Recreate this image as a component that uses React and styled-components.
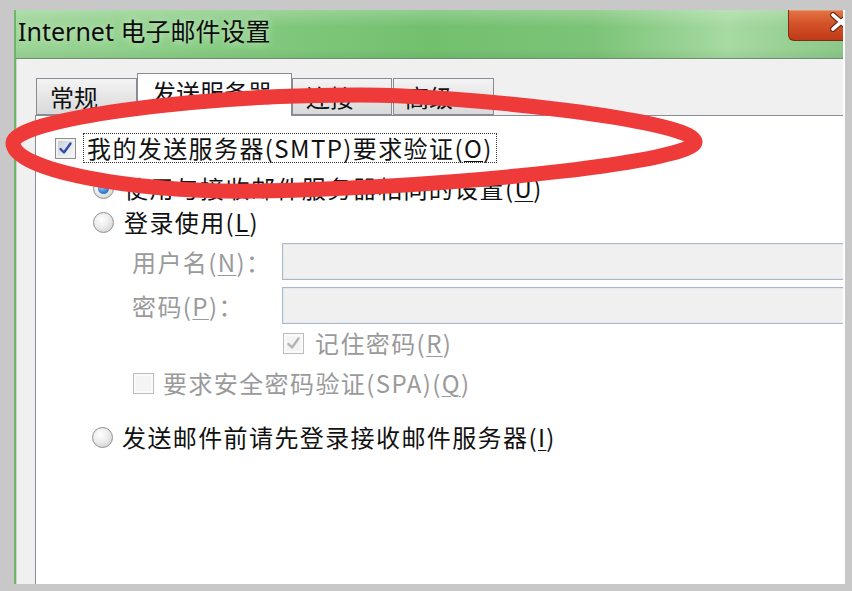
import React from 'react'
import styled, { createGlobalStyle } from 'styled-components'

const GlobalStyle = createGlobalStyle`
html, body {
    margin : 0;
    padding : 0;
}
body {
    background : #c8c8c8;
    font-family : "Noto Sans", "Noto Sans CJK SC", sans-serif;
    overflow : hidden;
}
`
const Page = styled.div`
position : relative;
width : 852px;
height : 591px;
box-sizing : border-box;
padding : 10px 0 0 14px;
`
const Window = styled.div`
width : 831px;
height : 574px;
box-sizing : border-box;
border-left : 2px solid #6fb56c;
border-right : 2px solid #fdfdfd;
display : flex;
flex-direction : column;
overflow : hidden;
`
const TitleBar = styled.div`
flex : none;
height : 48px;
display : flex;
align-items : flex-start;
justify-content : space-between;
background :
    linear-gradient(180deg, rgba(255,255,255,0.22) 0%, rgba(255,255,255,0) 35%, rgba(0,0,0,0) 80%, rgba(0,0,0,0.05) 100%),
    linear-gradient(90deg, #9bd496 0%, #88cc84 22%, #72c06e 50%, #7cc478 70%, #a6daa1 86%, #8cc889 100%);
border-bottom : 1px solid #6e8e6e;
`
const Title = styled.span`
margin : 4px 0 0 2px;
font-size : 25px;
line-height : 34px;
color : #0c0c0c;
text-shadow : 0 0 8px rgba(230,248,225,0.9);
`
const CloseButton = styled.div`
width : 55px;
height : 31px;
box-sizing : border-box;
display : flex;
justify-content : flex-end;
align-items : flex-start;
padding-top : 2px;
overflow : hidden;
background : linear-gradient(180deg, #e27644 0%, #d4522a 45%, #bf3b17 100%);
border : 1px solid #7d2c18;
border-top : none;
border-right : none;
border-radius : 0 0 0 6px;
box-shadow : inset 0 1px 0 rgba(255,255,255,0.25);
`
const CloseGlyph = styled.svg`
margin-right : -10px;
flex : none;
`
const Body = styled.div`
flex : 1;
background : #f0f0f0;
border-left : 1px solid #d2d2d2;
padding : 14px 0 0 18px;
overflow : hidden;
`
const TabRow = styled.div`
display : flex;
align-items : flex-end;
padding-left : 1px;
height : 42px;
`
const Tab = styled.div`
position : relative;
box-sizing : border-box;
width : ${p => p.$w}px;
height : ${p => (p.$active ? 43 : 37)}px;
margin-bottom : ${p => (p.$active ? -1 : 0)}px;
z-index : ${p => (p.$active ? 1 : 0)};
display : flex;
align-items : center;
padding-left : ${p => p.$pad}px;
padding-bottom : ${p => (p.$active ? 8 : 0)}px;
border : 1px solid #898c95;
border-bottom : ${p => (p.$active ? 'none' : '1px solid #898c95')};
background : ${p => (p.$active ? '#ffffff' : 'linear-gradient(180deg, #f4f4f4 0%, #e6e6e6 50%, #d9d9d9 100%)')};
font-family : "Noto Sans CJK SC", sans-serif;
font-size : 24px;
color : #111;
margin-right : ${p => (p.$gap ? 1 : 0)}px;
`
const Panel = styled.div`
width : 900px;
height : 520px;
box-sizing : border-box;
background : #ffffff;
border : 1px solid #898c95;
padding-top : 17px;
display : flex;
flex-direction : column;
font-family : "Noto Sans CJK SC", sans-serif;
font-size : 24px;
letter-spacing : 1.4px;
`
const Row = styled.div`
display : flex;
align-items : center;
height : ${p => p.$h}px;
margin-top : ${p => p.$mt}px;
padding-left : ${p => p.$indent}px;
gap : ${p => (p.$gap === undefined ? 10 : p.$gap)}px;
color : ${p => (p.$disabled ? '#9a9a9a' : '#111')};
line-height : 30px;
white-space : nowrap;
`
const FocusLabel = styled.span`
border : 1px dotted #333;
padding : 0 3px;
height : 30px;
box-sizing : border-box;
display : flex;
align-items : center;
`
const Mn = styled.span`
text-decoration : underline;
text-underline-offset : 3px;
text-decoration-thickness : 1px;
`
const Box = styled.span`
flex : none;
width : 21px;
height : 21px;
box-sizing : border-box;
display : flex;
align-items : center;
justify-content : center;
border : 1px solid ${p => (p.$disabled ? '#bcbcbc' : '#8e8f8f')};
background : ${p => (p.$disabled ? '#f4f4f4' : 'linear-gradient(135deg, #c3c9d2 0%, #e8ebef 60%, #f6f7f8 100%)')};
box-shadow : inset 0 0 0 2px ${p => (p.$disabled ? '#fafafa' : '#f2f2f2')};
`
const Radio = styled.span`
flex : none;
width : 21px;
height : 21px;
box-sizing : border-box;
border-radius : 50%;
display : flex;
align-items : center;
justify-content : center;
border : 1px solid #8e8f8f;
background : radial-gradient(circle at 40% 35%, #ffffff 0%, #ececec 45%, #c9c9c9 100%);
`
const RadioDot = styled.span`
width : 11px;
height : 11px;
border-radius : 50%;
background : radial-gradient(circle at 40% 35%, #9fd2f6 0%, #3d86d4 55%, #1d4f9c 100%);
`
const FieldLabel = styled.span`
width : 150px;
flex : none;
`
const Input = styled.div`
width : 620px;
height : 37px;
flex : none;
box-sizing : border-box;
background : #f0f0f0;
border : 1px solid #a9b7c8;
box-shadow : inset 0 0 0 1px #e3e9f0;
`
const Overlay = styled.svg`
position : absolute;
top : 0;
left : 0;
z-index : 5;
pointer-events : none;
`

const Check = ({ disabled }) => (
    <Box $disabled={disabled}>
        <svg width="15" height="15" viewBox="0 0 15 15">
            <path d="M2.5 8 L6 11.5 L12.5 2.5" fill="none" stroke={disabled ? '#b3b3b3' : '#2c4ea6'} strokeWidth="2.4" strokeLinecap="round" strokeLinejoin="round" />
        </svg>
    </Box>
)

const App = () => {
    return (
        <Page>
            <GlobalStyle />
            <Window>
                <TitleBar>
                    <Title>Internet 电子邮件设置</Title>
                    <CloseButton>
                        <CloseGlyph width="24" height="20" viewBox="0 0 24 20">
                            <path d="M4 3 L20 17 M20 3 L4 17" stroke="#6b2a18" strokeWidth="6" strokeLinecap="round" />
                            <path d="M4 3 L20 17 M20 3 L4 17" stroke="#ffffff" strokeWidth="3.6" strokeLinecap="round" />
                        </CloseGlyph>
                    </CloseButton>
                </TitleBar>
                <Body>
                    <TabRow>
                        <Tab $w={101} $pad={13}>常规</Tab>
                        <Tab $w={155} $pad={14} $active>发送服务器</Tab>
                        <Tab $w={100} $pad={13} $gap>连接</Tab>
                        <Tab $w={101} $pad={11}>高级</Tab>
                    </TabRow>
                    <Panel>
                        <Row $h={30} $mt={0} $indent={19} $gap={7}>
                            <Check />
                            <FocusLabel>我的发送服务器(SMTP)要求验证(<Mn>O</Mn>)</FocusLabel>
                        </Row>
                        <Row $h={30} $mt={10} $indent={57}>
                            <Radio><RadioDot /></Radio>
                            <span>使用与接收邮件服务器相同的设置(<Mn>U</Mn>)</span>
                        </Row>
                        <Row $h={30} $mt={4} $indent={57}>
                            <Radio />
                            <span>登录使用(<Mn>L</Mn>)</span>
                        </Row>
                        <Row $h={37} $mt={6} $indent={96} $gap={0} $disabled>
                            <FieldLabel>用户名(<Mn>N</Mn>)：</FieldLabel>
                            <Input />
                        </Row>
                        <Row $h={37} $mt={7} $indent={96} $gap={0} $disabled>
                            <FieldLabel>密码(<Mn>P</Mn>)：</FieldLabel>
                            <Input />
                        </Row>
                        <Row $h={26} $mt={6} $indent={247} $gap={11} $disabled>
                            <Check disabled />
                            <span>记住密码(<Mn>R</Mn>)</span>
                        </Row>
                        <Row $h={26} $mt={14} $indent={97} $gap={9} $disabled>
                            <Box $disabled />
                            <span>要求安全密码验证(SPA)(<Mn>Q</Mn>)</span>
                        </Row>
                        <Row $h={28} $mt={27} $indent={56} $gap={9}>
                            <Radio />
                            <span>发送邮件前请先登录接收邮件服务器(<Mn>I</Mn>)</span>
                        </Row>
                    </Panel>
                </Body>
            </Window>
            <Overlay width="852" height="591" viewBox="0 0 852 591">
                <path
                    d="M 13 143 C 13 120, 190 95, 360 95 C 460 95, 695 120, 695 142 C 695 160, 480 186, 260 191 C 130 193, 13 170, 13 143 Z"
                    fill="none"
                    stroke="#ef3a3a"
                    strokeWidth="15"
                    strokeLinejoin="round"
                />
            </Overlay>
        </Page>
    )
}

export default App
